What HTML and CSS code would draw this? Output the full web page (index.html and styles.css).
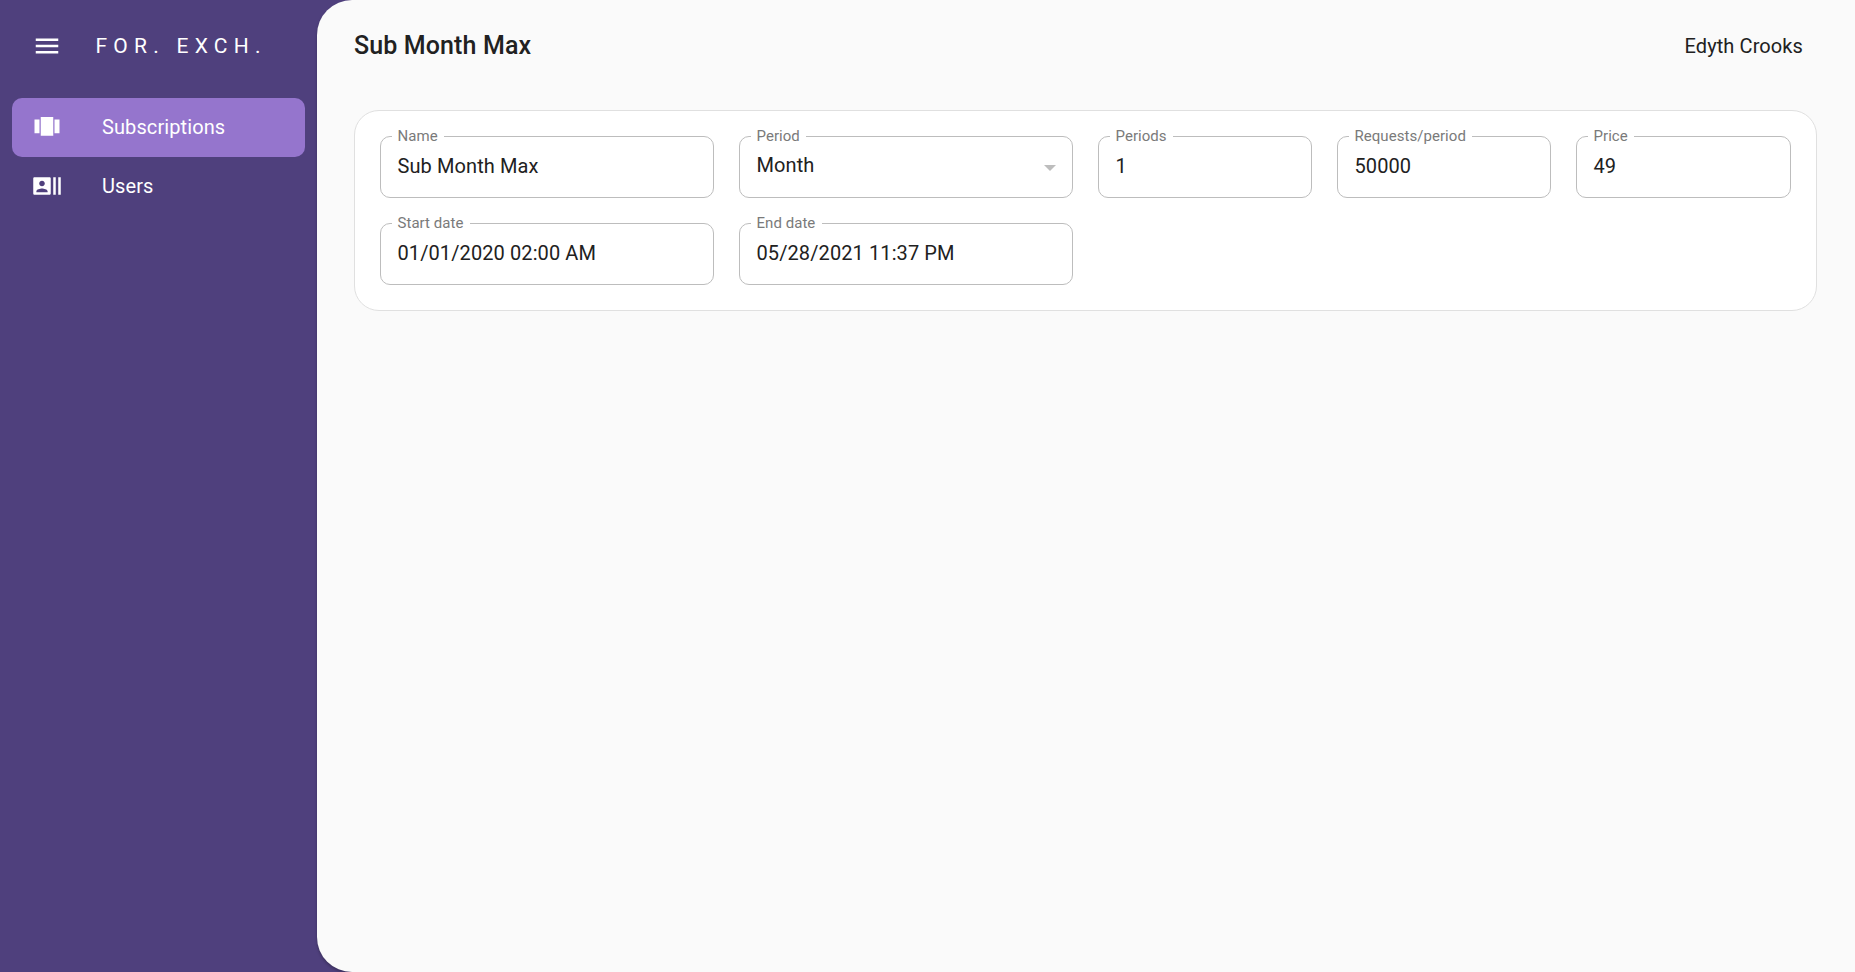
FILE: index.html
```
<!DOCTYPE html>
<html lang="en">
<head>
<meta charset="utf-8">
<title>Sub Month Max</title>
<link rel="stylesheet" href="styles.css">
</head>
<body>
<div class="app">
  <aside class="sidebar">
    <div class="brand">
      <svg class="icon icon-menu" viewBox="0 0 24 24"><path d="M3 18h18v-2H3v2zm0-5h18v-2H3v2zm0-7v2h18V6H3z"/></svg>
      <span class="brand-name">FOR. EXCH.</span>
    </div>
    <nav class="nav">
      <a class="nav-item active">
        <svg class="icon" viewBox="0 0 24 24"><path d="M7 19h10V4H7v15zm-5-2h4V6H2v11zM18 6v11h4V6h-4z"/></svg>
        <span>Subscriptions</span>
      </a>
      <a class="nav-item">
        <svg class="icon" viewBox="0 0 24 24"><path d="M21 5v14h2V5h-2zm-4 14h2V5h-2v14zM14 5H2c-.55 0-1 .45-1 1v12c0 .55.45 1 1 1h12c.55 0 1-.45 1-1V6c0-.55-.45-1-1-1zM8 7.750c1.240 0 2.250 1.010 2.250 2.250S9.240 12.250 8 12.250 5.750 11.240 5.750 10 6.760 7.750 8 7.750zM12.500 17h-9v-.75c0-1.500 3-2.250 4.500-2.250s4.500.75 4.500 2.250V17z"/></svg>
        <span>Users</span>
      </a>
    </nav>
  </aside>
  <main class="main">
    <header class="topbar">
      <h1 class="title">Sub Month Max</h1>
      <span class="user">Edyth Crooks</span>
    </header>
    <section class="card">
      <div class="field"><label class="label">Name</label><span class="value">Sub Month Max</span></div>
      <div class="field select"><label class="label">Period</label><span class="value">Month</span><i class="arrow"></i></div>
      <div class="field"><label class="label">Periods</label><span class="value">1</span></div>
      <div class="field"><label class="label">Requests/period</label><span class="value">50000</span></div>
      <div class="field"><label class="label">Price</label><span class="value">49</span></div>
      <div class="field"><label class="label">Start date</label><span class="value">01/01/2020 02:00 AM</span></div>
      <div class="field"><label class="label">End date</label><span class="value">05/28/2021 11:37 PM</span></div>
    </section>
  </main>
</div>
</body>
</html>
```
FILE: styles.css
```
* { box-sizing: border-box; }
body {
  margin: 0;
  font-family: Roboto, "Liberation Sans", sans-serif;
  font-size: 20px;
  color: #212121;
}
.app {
  display: flex;
  height: 100vh;
  background: #4f407d;
  overflow: hidden;
}
.sidebar {
  flex: none;
  width: 317px;
  color: #fff;
}
.brand {
  display: flex;
  align-items: center;
  height: 92px;
  padding-left: 32px;
}
.brand-name {
  margin-left: 33.500px;
  padding-bottom: 1px;
  font-size: 21px;
  letter-spacing: 6.250px;
  white-space: nowrap;
}
.icon {
  flex: none;
  width: 30px;
  height: 30px;
  fill: currentColor;
}
.nav { padding: 6px 12px 0; }
.nav-item {
  display: flex;
  align-items: center;
  height: 59px;
  padding-left: 20px;
  border-radius: 10px;
  letter-spacing: 0.1px;
}
.nav-item span {
  margin-left: 40px;
  padding-bottom: 2px;
}
.nav-item .icon { margin-bottom: 1px; }
.nav-item.active { background: #9575cd; }
.main {
  flex: 1;
  padding: 0 38px 0 37px;
  background: #fafafa;
  border-radius: 35px 0 0 35px;
  box-shadow: 0 2px 3px rgba(0, 0, 0, 0.25);
}
.topbar {
  display: flex;
  align-items: center;
  justify-content: space-between;
  height: 92px;
  padding-right: 14px;
}
.title {
  margin: 0;
  padding-bottom: 1px;
  font-size: 25px;
  font-weight: 500;
  letter-spacing: 0.12px;
}
.user { letter-spacing: 0.1px; }
.card {
  display: grid;
  grid-template-columns: 334px 334px 214px 214px 1fr;
  gap: 25px;
  margin-top: 18px;
  padding: 25px;
  background: #fff;
  border: 1px solid #e0e0e0;
  border-radius: 25px;
}
.field {
  position: relative;
  display: flex;
  height: 62px;
  padding: 17px 16.500px 0;
  border: 1px solid #bdbdbd;
  border-radius: 10px;
}
.label {
  position: absolute;
  top: -10px;
  left: 10.500px;
  padding: 0 6.500px 0 6px;
  background: #fff;
  font-size: 15px;
  line-height: 18px;
  letter-spacing: 0.05px;
  color: #7a7a7a;
}
.value {
  line-height: 24px;
  letter-spacing: 0.1px;
}
.select .value { margin-top: -1px; }
.arrow {
  margin: 11px 0 0 auto;
  width: 0;
  height: 0;
  border: 6px solid transparent;
  border-top-color: #bdbdbd;
  border-bottom: 0;
}
```
